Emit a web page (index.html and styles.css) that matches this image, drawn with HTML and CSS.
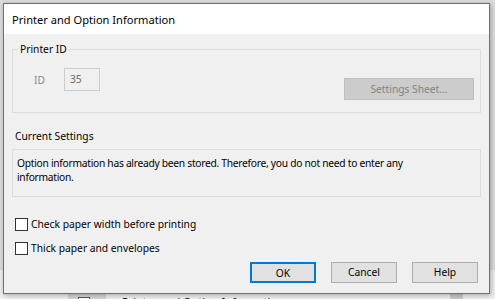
FILE: index.html
```html
<!DOCTYPE html>
<html>
<head>
<meta charset="utf-8">
<title>Printer and Option Information</title>
<link rel="stylesheet" href="styles.css">
</head>
<body>
<div class="desk">
  <div class="bg-window">
    <div class="bg-col"><span class="bg-check"></span></div>
    <span class="bg-text">Printer and Option Information</span>
  </div>
  <div class="bg-bar"></div>
  <div class="dialog">
    <div class="titlebar">Printer and Option Information</div>
    <div class="content">
      <fieldset class="group">
        <legend>Printer ID</legend>
        <div class="group-body">
          <div class="id-row"><span class="dis-label">ID</span><span class="idbox">35</span></div>
          <button class="btn btn-disabled" disabled>Settings Sheet...</button>
        </div>
      </fieldset>
      <div class="section-label">Current Settings</div>
      <div class="info">Option information has already been stored. Therefore, you do not need to enter any<br>information.</div>
      <label class="check first"><span class="box"></span>Check paper width before printing</label>
      <label class="check"><span class="box"></span>Thick paper and envelopes</label>
      <div class="buttons">
        <button class="btn btn-default">OK</button>
        <button class="btn">Cancel</button>
        <button class="btn">Help</button>
      </div>
    </div>
  </div>
</div>
</body>
</html>
```
FILE: styles.css
```css
html, body {
  margin: 0;
  padding: 0;
}
body {
  width: 495px;
  height: 299px;
  overflow: hidden;
  background: #dcdcdc;
  font-family: "Noto Sans", "Open Sans", sans-serif;
  font-size: 10.25px;
  color: #000;
}
.desk {
  position: relative;
  width: 495px;
  height: 299px;
  overflow: hidden;
}
.bg-window {
  position: absolute;
  left: 0;
  top: 270px;
  width: 495px;
  height: 29px;
  background: #ededed;
  display: flex;
  align-items: flex-end;
}
.bg-col {
  margin-left: 68px;
  width: 38px;
  height: 29px;
  background: #d3d3d3;
  position: relative;
}
.bg-check {
  position: absolute;
  left: 10px;
  top: 27px;
  width: 10px;
  height: 10px;
  border: 1px solid #555;
  background: #fff;
}
.bg-text {
  margin-left: 16px;
  font-size: 11px;
  line-height: 16px;
  margin-bottom: -11px;
}
.bg-bar {
  position: absolute;
  left: 450px;
  top: 280px;
  width: 13px;
  height: 19px;
  background: #c8c8c8;
}
.dialog {
  position: absolute;
  left: 3px;
  top: 3px;
  width: 487px;
  height: 291px;
  box-sizing: border-box;
  border: 1px solid #707070;
  background: #f0f0f0;
  box-shadow: 1px 1px 5px rgba(0, 0, 0, 0.3);
  display: flex;
  flex-direction: column;
}
.titlebar {
  flex: none;
  height: 30px;
  line-height: 31px;
  padding-left: 8px;
  background: #fff;
  font-size: 11.1px;
}
.content {
  flex: 1;
  display: flex;
  flex-direction: column;
  padding: 0 8px 0 8px;
}
.group {
  margin: 7px 0 0;
  padding: 0;
  border: 1px solid #dcdcdc;
  min-width: 0;
}
.group legend {
  margin-left: 5px;
  padding: 0 2px;
  line-height: 16px;
  font-size: 10.25px;
}
.group-body {
  display: flex;
  justify-content: space-between;
  align-items: flex-start;
  padding: 11px 6px 12px 21px;
}
.id-row {
  display: flex;
  align-items: center;
}
.dis-label {
  width: 30px;
  color: #8a8a8a;
}
.idbox {
  width: 36px;
  height: 23px;
  box-sizing: border-box;
  border: 1px solid #cccccc;
  padding-left: 5px;
  line-height: 21px;
  color: #6d6d6d;
}
.btn {
  font-family: inherit;
  font-size: 10.25px;
  color: #000;
  background: #e1e1e1;
  border: 1px solid #adadad;
  border-radius: 0;
  padding: 0;
  margin: 0;
  height: 21px;
  width: 66px;
  line-height: 19px;
}
.btn-disabled {
  margin-top: 10px;
  width: 130px;
  height: 22px;
  background: #cccccc;
  border-color: #bfbfbf;
  color: #838383;
}
.btn-default {
  border: 2px solid #0078d7;
}
.section-label {
  margin-top: 15px;
  margin-left: 3px;
  line-height: 16px;
}
.info {
  margin-top: 5px;
  height: 48px;
  box-sizing: border-box;
  border: 1px solid #dcdcdc;
  padding: 6px 4px;
  line-height: 14px;
  letter-spacing: -0.28px;
}
.check {
  display: flex;
  align-items: center;
  margin-top: 8px;
  margin-left: 3px;
  line-height: 16px;
}
.check.first {
  margin-top: 19px;
}
.box {
  width: 13px;
  height: 13px;
  box-sizing: border-box;
  border: 1px solid #333;
  background: #fff;
  margin-right: 3px;
}
.buttons {
  margin-top: 6px;
  align-self: flex-end;
  margin-right: 3px;
  display: flex;
  gap: 15px;
}
```
